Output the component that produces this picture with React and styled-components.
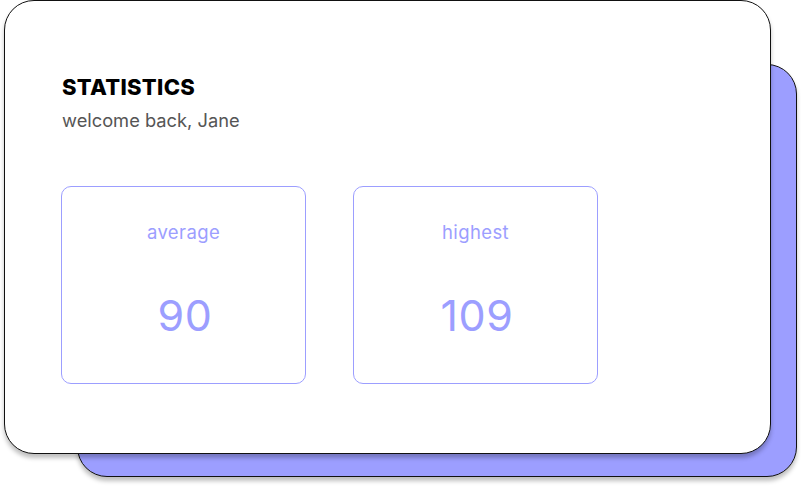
import styled, { createGlobalStyle } from 'styled-components';

const GlobalStyle = createGlobalStyle`
  * { box-sizing: border-box; }
  body {
    margin: 0;
    background: #ffffff;
    font-family: "Inter", "Noto Sans", sans-serif;
  }
`;

const Stage = styled.div`
  display: grid;
  width: 793px;
  margin-left: 4px;
  padding-bottom: 9px;
`;

const BackCard = styled.div`
  grid-area: 1 / 1;
  margin: 64px 0 0 73px;
  width: 720px;
  height: 413px;
  background: #9c9eff;
  border: 1px solid #111;
  border-radius: 30px;
  box-shadow: 0 4px 4px rgba(0, 0, 0, 0.25);
`;

const Card = styled.section`
  grid-area: 1 / 1;
  align-self: start;
  position: relative;
  width: 767px;
  height: 454px;
  background: #fff;
  border: 1px solid #111;
  border-radius: 30px;
  box-shadow: 0 4px 4px rgba(0, 0, 0, 0.25);
  padding: 73px 57px 0 56px;
  display: flex;
  flex-direction: column;
`;

const Title = styled.h1`
  margin: 0;
  font-size: 22px;
  font-weight: 800;
  line-height: 26px;
  color: #000;
  letter-spacing: 0.3px;
  margin-left: 1px;
`;

const Subtitle = styled.p`
  margin: 9px 0 0 1px;
  font-size: 18.3px;
  line-height: 22px;
  color: #555;
`;

const Stats = styled.div`
  display: flex;
  gap: 47px;
  margin-top: 55px;
`;

const StatBox = styled.div`
  width: 245px;
  height: 198px;
  border: 1px solid #9c9eff;
  border-radius: 10px;
  display: flex;
  flex-direction: column;
  align-items: center;
  padding-top: 33px;
  color: #9c9eff;
`;

const Label = styled.span`
  font-size: 18.5px;
  line-height: 24px;
  letter-spacing: 0.4px;
`;

const Value = styled.span`
  margin-top: 46px;
  font-size: 43px;
  line-height: 50px;
  font-weight: 400;
  letter-spacing: 0.5px;
  padding-left: 3px;
`;

const stats = [
  { label: 'average', value: 90 },
  { label: 'highest', value: 109 },
];

export default function App() {
  return (
    <>
      <GlobalStyle />
      <Stage>
        <BackCard />
        <Card>
          <Title>STATISTICS</Title>
          <Subtitle>welcome back, Jane</Subtitle>
          <Stats>
            {stats.map((s) => (
              <StatBox key={s.label}>
                <Label>{s.label}</Label>
                <Value>{s.value}</Value>
              </StatBox>
            ))}
          </Stats>
        </Card>
      </Stage>
    </>
  );
}
